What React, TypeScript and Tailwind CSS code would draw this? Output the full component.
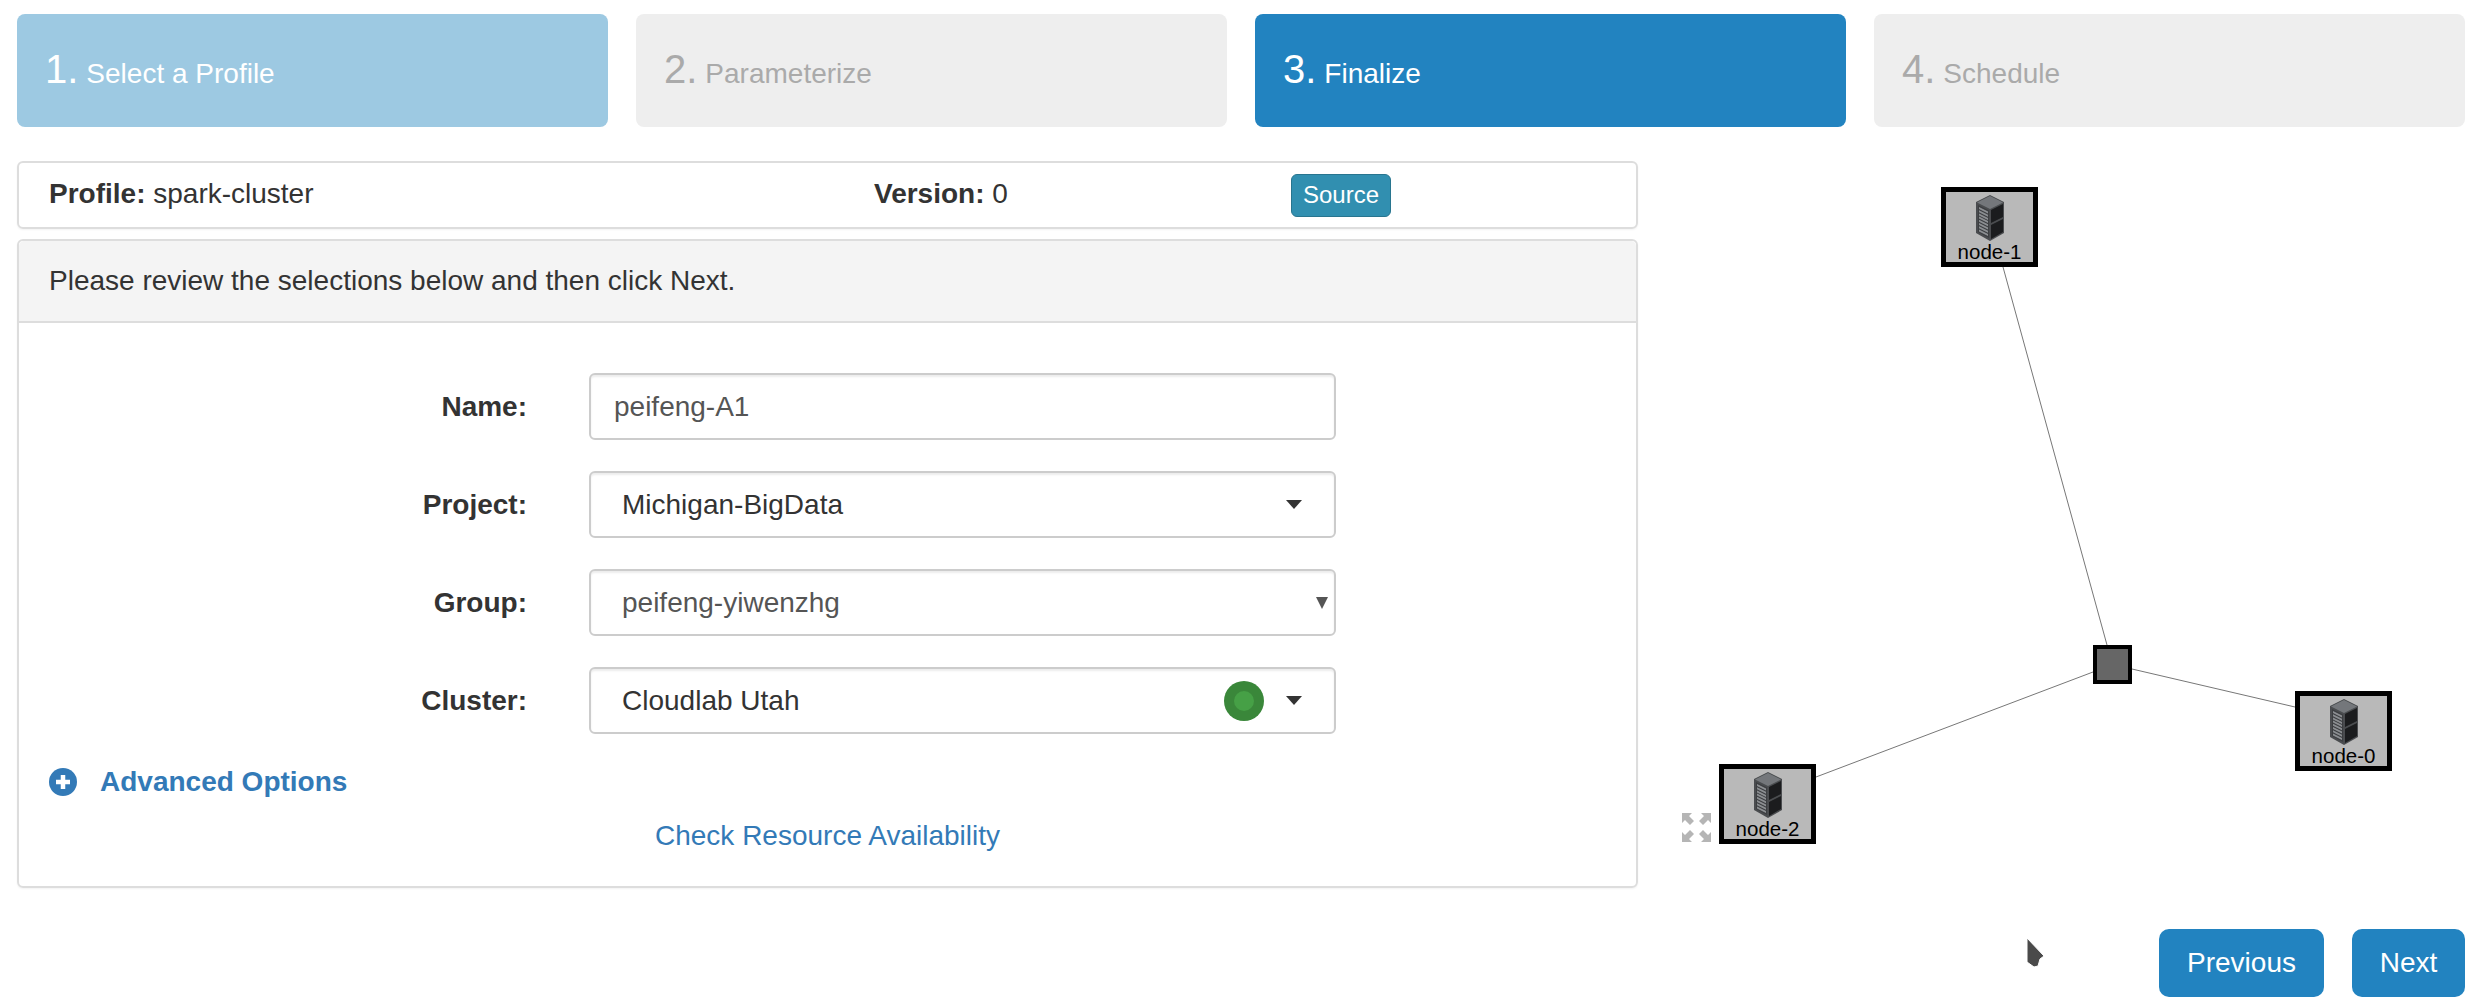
const font = "font-['Liberation_Sans',Arial,sans-serif]";

const steps = [
  { num: "1.", label: "Select a Profile", cls: "bg-[#9dc9e2] text-white" },
  { num: "2.", label: "Parameterize", cls: "bg-[#eeeeee] text-[#aaaaaa]" },
  { num: "3.", label: "Finalize", cls: "bg-[#2283c0] text-white" },
  { num: "4.", label: "Schedule", cls: "bg-[#eeeeee] text-[#aaaaaa]" },
];

function Caret() {
  return <span className="w-0 h-0 border-x-[8px] border-x-transparent border-t-[9px] border-t-[#333333]" />;
}

function Row({ label, children }: { label: string; children: React.ReactNode }) {
  return (
    <div className="flex items-center">
      <label className="w-[508px] text-right font-bold text-[#333333] text-[28px]">{label}</label>
      <div className="ml-[62px] w-[747px] h-[67px] flex items-center rounded-[6px] border-2 border-[#cccccc] bg-white text-[#555555] text-[28px] shadow-[inset_0_2px_2px_rgba(0,0,0,0.075)]">
        {children}
      </div>
    </div>
  );
}

function ServerIcon() {
  return (
    <svg width="28" height="46" viewBox="0 0 28 46">
      <path d="M14 0 L28 7 L28 38 L14 46 L0 38 L0 7 Z" fill="#4a4c4f" />
      <path d="M14 1 L27 7.5 L14 14 L1 7.5 Z" fill="#74777b" />
      <path d="M15 15 L27 9 L27 22 L15 28 Z" fill="#1b1c1e" />
      <path d="M15 30 L27 24 L27 37 L15 44 Z" fill="#1b1c1e" />
      <path d="M2 10 L13 15.5 L13 43 L2 37 Z" fill="#3c3e41" />
      {[0, 1, 2, 3, 4, 5, 6, 7].map((i) => (
        <path key={i} d={`M3 ${12 + i * 3.2} L12 ${16.5 + i * 3.2} L12 ${18.5 + i * 3.2} L3 ${14 + i * 3.2} Z`} fill="#8b8e91" />
      ))}
    </svg>
  );
}

function Node({ name, x, y }: { name: string; x: number; y: number }) {
  return (
    <div
      className="absolute w-[97px] h-[80px] border-[5px] border-black bg-[#b9b9b9] flex flex-col items-center"
      style={{ left: x, top: y }}
    >
      <div className="mt-[3px] h-[46px]">
        <ServerIcon />
      </div>
      <span className="text-[20.5px] leading-[22px] text-black">{name}</span>
    </div>
  );
}

export default function App() {
  return (
    <div className={`${font} relative w-[2478px] h-[1008px] overflow-hidden bg-white pt-[14px] pl-[17px] pr-[13px] flex flex-col`}>
      <div className="grid grid-cols-4 gap-[28px]">
        {steps.map((s) => (
          <div key={s.num} className={`h-[113px] rounded-[8px] flex items-center pl-[28px] ${s.cls}`}>
            <span className="text-[40px] mr-[8px] -mt-[3px]">{s.num}</span>
            <span className="text-[28px] mt-[6px]">{s.label}</span>
          </div>
        ))}
      </div>

      <div className="flex mt-[34px]">
        <div className="w-[1621px] flex flex-col">
          <div className="h-[68px] flex items-center rounded-[6px] border-2 border-[#dddddd] shadow-[0_1px_2px_rgba(0,0,0,0.05)] text-[#333333] text-[28px] pl-[30px]">
            <span className="w-[825px] -mt-[2px]">
              <b>Profile:</b> spark-cluster
            </span>
            <span className="w-[417px] -mt-[2px]">
              <b>Version:</b> 0
            </span>
            <span className="h-[43px] w-[100px] flex items-center justify-center rounded-[6px] bg-[#318fb0] border border-[#28758f] text-white text-[24px]">
              Source
            </span>
          </div>

          <div className="mt-[10px] h-[649px] rounded-[6px] border-2 border-[#dddddd] shadow-[0_1px_2px_rgba(0,0,0,0.05)] flex flex-col">
            <div className="h-[82px] bg-[#f4f4f4] border-b-2 border-[#dddddd] rounded-t-[5px] flex items-center pl-[30px] text-[#333333] text-[28px] shrink-0">
              Please review the selections below and then click Next.
            </div>
            <div className="flex flex-col gap-[31px] pt-[50px]">
              <Row label="Name:">
                <span className="pl-[23px]">peifeng-A1</span>
              </Row>
              <Row label="Project:">
                <span className="pl-[31px] text-[#333333] flex-1">Michigan-BigData</span>
                <span className="mr-[32px] flex">
                  <Caret />
                </span>
              </Row>
              <Row label="Group:">
                <span className="pl-[31px] flex-1">peifeng-yiwenzhg</span>
                <span className="mr-[6px] w-0 h-0 border-x-[6px] border-x-transparent border-t-[12px] border-t-[#555555]" />
              </Row>
              <Row label="Cluster:">
                <span className="pl-[31px] text-[#333333] flex-1">Cloudlab Utah</span>
                <span className="w-[40px] h-[40px] rounded-full bg-[#3a873a] flex items-center justify-center mr-[22px]">
                  <span className="w-[20px] h-[20px] rounded-full bg-[#46a046]" />
                </span>
                <span className="mr-[32px] flex">
                  <Caret />
                </span>
              </Row>
            </div>
            <div className="flex items-center mt-[27px] pl-[30px] text-[#337ab7] text-[28px] font-bold">
              <svg width="28" height="28" viewBox="0 0 28 28" className="mr-[23px]">
                <circle cx="14" cy="14" r="14" fill="#337ab7" />
                <path d="M14 7 V21 M7 14 H21" stroke="#fff" strokeWidth="4.5" />
              </svg>
              Advanced Options
            </div>
            <div className="text-center mt-[12px] text-[#337ab7] text-[28px]">Check Resource Availability</div>
          </div>
        </div>
      </div>

      <div className="flex justify-end gap-[28px] mt-[41px]">
        <span className="h-[68px] w-[165px] rounded-[10px] bg-[#2283c0] text-white text-[28px] flex items-center justify-center">Previous</span>
        <span className="h-[68px] w-[113px] rounded-[10px] bg-[#2283c0] text-white text-[28px] flex items-center justify-center">Next</span>
      </div>

      {/* topology canvas */}
      <svg className="absolute left-0 top-0 w-[2478px] h-[1008px] pointer-events-none" fill="none" stroke="#777777" strokeWidth="1">
        <line x1="2003" y1="267" x2="2107" y2="645" />
        <line x1="1816" y1="777" x2="2093" y2="672" />
        <line x1="2132" y1="669" x2="2295" y2="707" />
      </svg>
      <Node name="node-1" x={1941} y={187} />
      <Node name="node-2" x={1719} y={764} />
      <Node name="node-0" x={2295} y={691} />
      <div className="absolute left-[2093px] top-[645px] w-[39px] h-[39px] border-[4px] border-black bg-[#666666]" />
      <svg className="absolute left-[1682px] top-[813px]" width="29" height="29" viewBox="0 0 29 29" fill="#b5b5b5">
        <path d="M0 0 H10 L7 3 L12 8 L8 12 L3 7 L0 10 Z" />
        <path d="M29 0 H19 L22 3 L17 8 L21 12 L26 7 L29 10 Z" />
        <path d="M0 29 H10 L7 26 L12 21 L8 17 L3 22 L0 19 Z" />
        <path d="M29 29 H19 L22 26 L17 21 L21 17 L26 22 L29 19 Z" />
      </svg>
      <svg className="absolute left-[2025px] top-[937px]" width="20" height="32" viewBox="0 0 20 32">
        <path d="M2 1 L19 19 L15 22 L13 29 L9 30 L2 25 Z" fill="#4a4a4a" stroke="#fff" strokeWidth="1" />
      </svg>
    </div>
  );
}
